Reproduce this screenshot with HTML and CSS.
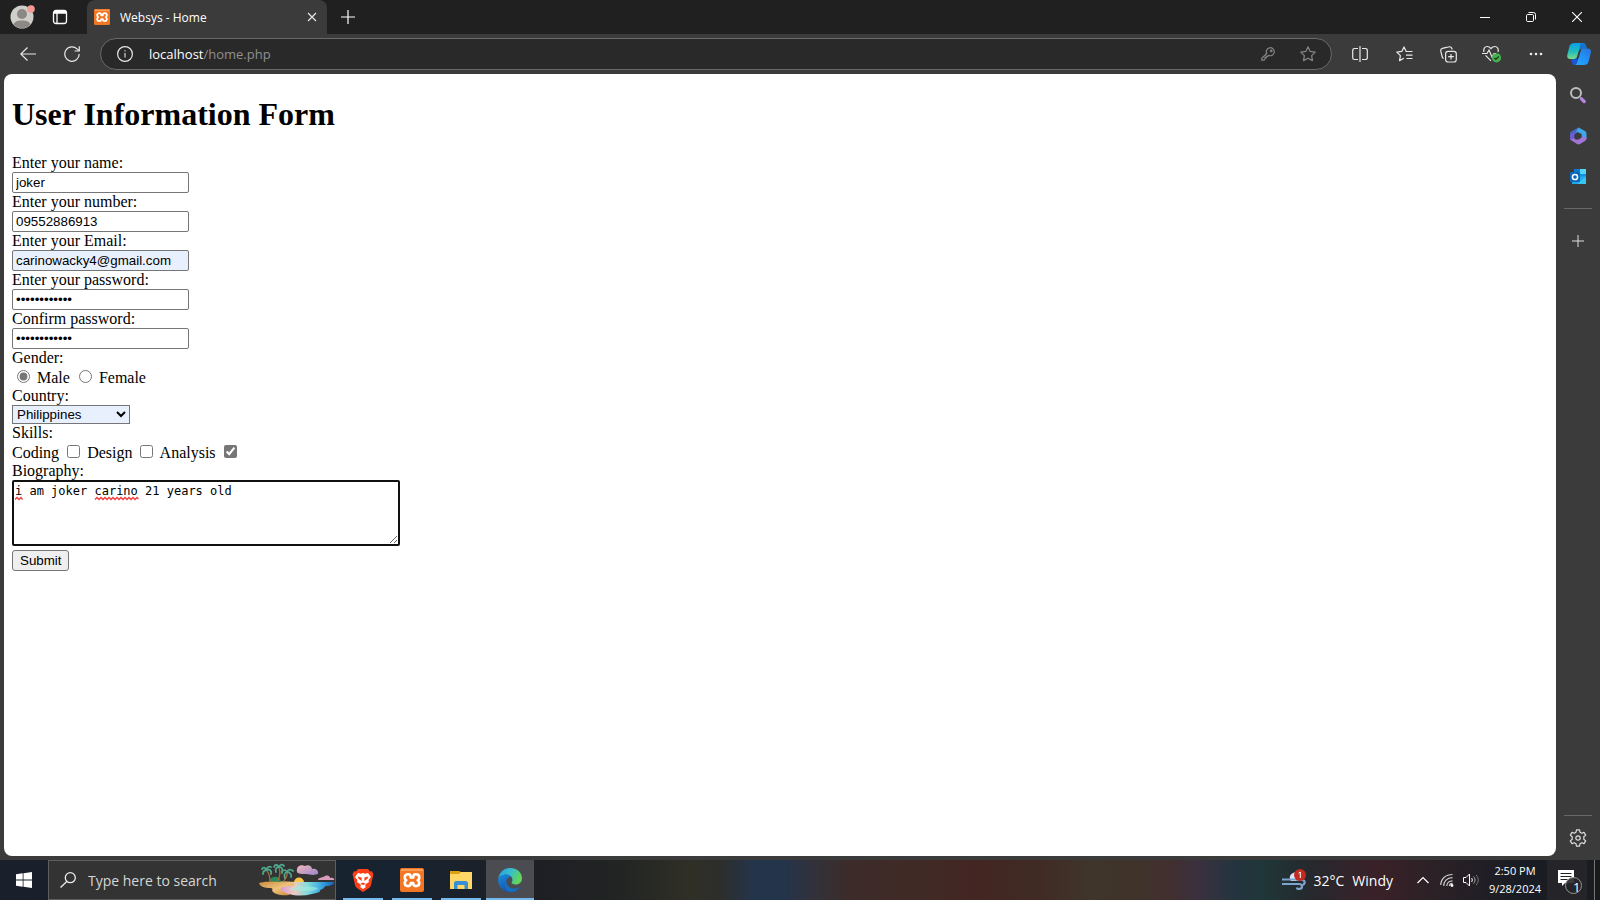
FILE: index.html
```html
<!DOCTYPE html>
<html lang="en">
<head>
<meta charset="utf-8">
<title>Websys - Home</title>
<link rel="stylesheet" href="styles.css">
</head>
<body>
<div class="desktop">
  <header class="titlebar">
    <button class="profile" aria-label="Profile">
      <svg width="26" height="26" viewBox="0 0 26 26"><circle cx="12" cy="14" r="11.5" fill="#d0cecb"/><circle cx="12" cy="11" r="5" fill="#8c8883"/><path d="M3.5 21.5C5 18 8 17.5 12 17.5s7 .5 8.500 4A11.500 11.500 0 0 1 3.500 21.500z" fill="#8c8883"/><circle cx="21" cy="6" r="3.800" fill="#f59a94"/></svg>
    </button>
    <button class="workspaces" aria-label="Tab actions">
      <svg width="16" height="16" viewBox="0 0 16 16" fill="none" stroke="#fff" stroke-width="1.300"><rect x="1.500" y="1.500" width="13" height="13" rx="2.500"/><path d="M1.500 4h13M2 2.700h12M5 4v10.500"/></svg>
    </button>
    <div class="tab">
      <svg width="16" height="16" viewBox="0 0 24 24"><use href="#xampp"/></svg>
      <span class="tab-title">Websys - Home</span>
      <button class="tab-close" aria-label="Close tab"><svg width="10" height="10" viewBox="0 0 10 10" stroke="#e4e4e4" stroke-width="1.200"><path d="M1 1l8 8M9 1L1 9"/></svg></button>
    </div>
    <button class="new-tab" aria-label="New tab"><svg width="14" height="14" viewBox="0 0 14 14" stroke="#fff" stroke-width="1.200"><path d="M7 0v14M0 7h14"/></svg></button>
    <div class="window-controls">
      <button aria-label="Minimize"><svg width="10" height="10" viewBox="0 0 10 10" stroke="#fff"><path d="M0 5.500h10"/></svg></button>
      <button aria-label="Restore"><svg width="10" height="10" viewBox="0 0 10 10" fill="none" stroke="#fff"><rect x=".5" y="2.500" width="7" height="7" rx="1.200"/><path d="M2.500.5H7.500A2 2 0 0 1 9.500 2.500V7.500"/></svg></button>
      <button aria-label="Close"><svg width="10" height="10" viewBox="0 0 10 10" stroke="#fff" stroke-width="1.100"><path d="M0 0l10 10M10 0L0 10"/></svg></button>
    </div>
  </header>

  <nav class="toolbar" aria-label="Browser toolbar">
    <button aria-label="Back"><svg width="16" height="16" viewBox="0 0 16 16" fill="none" stroke="#e8e8e8" stroke-width="1.200"><path d="M7.500 1.500L.8 8l6.700 6.500M1 8h15"/></svg></button>
    <button aria-label="Refresh"><svg width="16" height="16" viewBox="0 0 16 16" fill="none" stroke="#e8e8e8" stroke-width="1.200"><path d="M15.200 8A7.200 7.200 0 1 1 13 2.900L14.800 4.700M15.300.3V5H10.600"/></svg></button>
    <div class="address">
      <button class="info" aria-label="View site information"><svg width="16" height="16" viewBox="0 0 16 16" fill="none" stroke="#e8e8e8"><circle cx="8" cy="8" r="7.400" stroke-width="1.200"/><path d="M8 7v4.500M8 4.200v1.400" stroke-width="1.400" stroke="#bdbdbd"/></svg></button>
      <span class="url"><span class="host">localhost</span>/home.php</span>
      <button aria-label="Passwords"><svg width="14" height="14" viewBox="0 0 14 14" fill="none" stroke="#858585" stroke-width="1.200"><path d="M5.700 6.500A4 4 0 1 1 7.700 8.400L6.700 9.300H5.400V10.700H4V12.100L3 13.200H.8V11.200z"/><circle cx="10.300" cy="3.900" r=".7" fill="#858585"/></svg></button>
      <button aria-label="Add to favorites"><svg width="16" height="16" viewBox="0 0 16 16" fill="none" stroke="#858585" stroke-width="1.200" stroke-linejoin="round"><path d="M8 .8l2.200 4.600 5 .7-3.600 3.500.9 5L8 12.200l-4.500 2.400.9-5L.8 6.100l5-.7z"/></svg></button>
    </div>
    <button aria-label="Split screen"><svg width="16" height="16" viewBox="0 0 16 16" fill="none" stroke="#e8e8e8" stroke-width="1.200"><path d="M8 0v16M6 2.500H2.500A1.800 1.800 0 0 0 .7 4.300v7.400a1.800 1.800 0 0 0 1.800 1.800H6M10 2.500h3.500a1.800 1.800 0 0 1 1.800 1.800v7.400a1.800 1.800 0 0 1-1.800 1.800H10"/></svg></button>
    <button aria-label="Favorites"><svg width="17" height="16" viewBox="0 0 17 16" fill="none" stroke="#e8e8e8" stroke-width="1.200" stroke-linejoin="round"><path d="M16.500 5.500H10.200L8 .9 5.800 5.400l-5 .7 3.600 3.500-.9 5 4.300-2.300M10 9.200h6.500M10.500 12.500h6"/></svg></button>
    <button aria-label="Collections"><svg width="17" height="17" viewBox="0 0 17 17" fill="none" stroke="#e8e8e8" stroke-width="1.200"><rect x="5.600" y="5.300" width="10.700" height="10.700" rx="2.500"/><path d="M11 8v5.500M8.200 10.700h5.600M3.600 12.500C2.500 12 2.300 11.300 2.100 10.500L.8 5.200C.5 3.800 1 2.700 2.400 2.300L8.500.9C10 .5 11.500 1.200 12 2.800L12.200 3.500"/></svg></button>
    <button aria-label="Browser essentials"><svg width="20" height="18" viewBox="0 0 20 18" fill="none" stroke="#e8e8e8" stroke-width="1.200"><path d="M2 7C1 4 2.700 1.500 5.200 1.500c1.500 0 2.700.7 3.800 2 1.100-1.300 2.300-2 3.800-2C15.300 1.500 17 4 16 7M3.500 10.300l5.500 5.500M0 8.500h5L7 5l3 7 2-3.500h2"/><circle cx="14.500" cy="12.800" r="4.600" fill="#45b050" stroke="none"/><path d="M12.400 13l1.500 1.500 2.800-3" stroke="#17351b"/></svg></button>
    <button aria-label="Settings and more"><svg width="14" height="4" viewBox="0 0 14 4" fill="#eee"><circle cx="2" cy="2" r="1.300"/><circle cx="7" cy="2" r="1.300"/><circle cx="12" cy="2" r="1.300"/></svg></button>
    <button class="copilot" aria-label="Copilot"><svg width="24" height="24" viewBox="0 0 24 24"><defs><linearGradient id="cpA" x1="0" y1="0" x2="0" y2="1"><stop offset="0" stop-color="#08a0e8"/><stop offset=".55" stop-color="#22bdb9"/><stop offset="1" stop-color="#7cdc86"/></linearGradient><linearGradient id="cpB" x1="1" y1="0" x2="0" y2="1"><stop offset="0" stop-color="#2a70da"/><stop offset=".6" stop-color="#2197fa"/><stop offset="1" stop-color="#29aaff"/></linearGradient></defs><path d="M8 1h8c2 0 2.500 1.500 3 3l.8 2.500H15c-2 0-2.800 1-3.300 3l-1.500 5c-.5 1.700-1.400 2.500-3 2.500H3c-2.500 0-3.200-2-2.600-4.500l2-8C3 2.500 4.500 1 8 1z" fill="url(#cpA)"/><path d="M7 17c2 0 2.800-.8 3.300-2.500l-.3 4c0 3-.8 4.500-2.500 4.500-1.600 0-2.200-1-2.700-3L4 17z" fill="#1c55d8"/><path d="M19 6.500h2c2.600 0 3.400 2 2.800 4.500l-2 8c-.6 2.500-2 4-5 4H7.500c1.700 0 2.300-1.500 2.800-3.500l3-10C13.900 7.500 15 6.500 17 6.500z" fill="url(#cpB)"/><path d="M15 1c2.500 0 3.300 1 3.800 3l.8 2.500H15c-1.500 0-2.500.8-3 2.200l1-5C13.300 2 13.700 1 15 1z" fill="#1472cf"/><path d="M12.300 8.500L14 8l-2.500 8.500H9.800z" fill="#3b3b3b"/></svg></button>
  </nav>

  <div class="content">
    <main class="page">
      <h1>User Information Form</h1>
      <form action="#">
        <label for="name">Enter your name:</label><br>
        <input class="text" type="text" id="name" value="joker"><br>
        <label for="number">Enter your number:</label><br>
        <input class="text" type="text" id="number" value="09552886913"><br>
        <label for="email">Enter your Email:</label><br>
        <input class="text filled" type="email" id="email" value="carinowacky4@gmail.com"><br>
        <label for="password">Enter your password:</label><br>
        <input class="text" type="password" id="password" value="abcdefghijkl"><br>
        <label for="confirm">Confirm password:</label><br>
        <input class="text" type="password" id="confirm" value="abcdefghijkl"><br>
        <span>Gender:</span><br>
        <input type="radio" name="gender" id="male" checked> <label for="male">Male</label>
        <input type="radio" name="gender" id="female"> <label for="female">Female</label><br>
        <label for="country">Country:</label><br>
        <select class="filled country" id="country"><option>Philippines</option></select><br>
        <span>Skills:</span><br>
        <label for="coding">Coding</label> <input type="checkbox" id="coding">
        <label for="design">Design</label> <input type="checkbox" id="design">
        <label for="analysis">Analysis</label> <input type="checkbox" id="analysis" checked><br>
        <label for="bio">Biography:</label>
        <div class="bio-wrap">
          <textarea id="bio" class="bio" rows="4" spellcheck="false">i am joker carino 21 years old</textarea>
          <svg class="spelling" width="140" height="5" viewBox="0 0 140 5" fill="none" stroke="#f03a3a" stroke-width="1.300" aria-hidden="true"><path d="M0 3.500l2-2 2 2 2-2 1.500 2M80 3.500l2-2 2 2 2-2 2 2 2-2 2 2 2-2 2 2 2-2 2 2 2-2 2 2 2-2 2 2 2-2 2 2 2-2 2 2 2-2 2 2 2-2 1.500 1.500"/></svg>
        </div>
        <button class="submit" type="submit">Submit</button>
      </form>
    </main>
    <aside class="sidebar">
      <button aria-label="Search"><svg width="18" height="18" viewBox="0 0 18 18" fill="none"><circle cx="7" cy="7" r="5" stroke="#bdbdbd" stroke-width="2"/><path d="M11 11.500l1.500 1.500" stroke="#888" stroke-width="1.500"/><path d="M12.500 12.800l2.700 2.700" stroke="#b984ea" stroke-width="3.200" stroke-linecap="round"/></svg></button>
      <button aria-label="Microsoft 365"><svg width="18" height="18" viewBox="0 0 18 18"><path d="M9.500.5L3 4C1.700 4.800 1 5.500 1 7v5.500L5.500 11V7.500L12 3.500z" fill="#4664c8"/><path d="M9.500.5L16 4c1 .6 1.500 1.500 1.500 3v5l-5-2.500V7L7 4.500z" fill="#3fa7e8"/><path d="M1 12.500L8 17c1 .6 2 .5 3 0l5-3c1-.6 1.500-1.500 1.500-3.500L12.500 9.500 7 13l-2-2z" fill="#a374d8"/><path d="M7 4.500L5.500 7.500V11L1 12.500V8z" fill="#735bd2"/><path d="M9 5.500l3.500 2v3.300L9 12.800l-3.500-2V7.500z" fill="#3b3b3b"/></svg></button>
      <button aria-label="Outlook"><svg width="18" height="18" viewBox="0 0 18 18"><path d="M5 1h12v9H5z" fill="#1490df"/><path d="M11 1h6v5h-6z" fill="#50d4f8"/><path d="M5 1h6v5H5z" fill="#0c78c8"/><path d="M3 9l14-1v8H3z" fill="#22a7ec"/><path d="M11 13l6-4v7H9z" fill="#36c5ef"/><rect x="1" y="4" width="10" height="10" rx="1" fill="#0968be"/><circle cx="6" cy="9" r="2.600" fill="none" stroke="#fff" stroke-width="1.500"/></svg></button>
      <hr>
      <button class="add" aria-label="Customize sidebar"><svg width="12" height="12" viewBox="0 0 12 12" stroke="#e0e0e0"><path d="M6 0v12M0 6h12"/></svg></button>
      <hr class="lower">
      <button class="gear" aria-label="Settings"><svg width="18" height="18" viewBox="0 0 18 18" fill="none" stroke="#dedede" stroke-width="1.200" stroke-linejoin="round"><path d="M7.500.8h3L11 3.200l1.700 1 2.300-.8 1.700 2.700-1.900 1.700v2.400l1.900 1.700-1.700 2.700-2.300-.8-1.700 1-.5 2.400h-3L7 14.800l-1.700-1-2.300.8-1.700-2.700 1.900-1.700V7.800L1.300 6.100 3 3.400l2.300.8 1.700-1z"/><circle cx="9" cy="9" r="2.200"/></svg></button>
    </aside>
  </div>

  <footer class="taskbar">
    <button class="start" aria-label="Start"><svg width="16" height="16" viewBox="0 0 16 16" fill="#fff"><path d="M0 2.300L6.700 1.300V7.600H0zM7.500 1.200L16 0v7.600H7.500zM0 8.400h6.700v6.300L0 13.700zM7.500 8.400H16V16l-8.500-1.200z"/></svg></button>
    <div class="search">
      <svg width="16" height="16" viewBox="0 0 16 16" fill="none" stroke="#ececec" stroke-width="1.300"><circle cx="10.300" cy="5.700" r="5"/><path d="M6.800 9.500L.5 15.500"/></svg>
      <input type="text" placeholder="Type here to search" aria-label="Type here to search">
      <svg class="island" width="77" height="34" viewBox="0 0 77 34">
        <defs>
          <linearGradient id="sea" x1="0" y1="0" x2="1" y2="0"><stop offset="0" stop-color="#d79ad8"/><stop offset=".25" stop-color="#f0c9c0"/><stop offset=".5" stop-color="#7fdcdc"/><stop offset=".75" stop-color="#3ea8e0"/><stop offset="1" stop-color="#1160c0"/></linearGradient>
          <linearGradient id="sand" x1="0" y1="0" x2="1" y2="1"><stop offset="0" stop-color="#c98a3c"/><stop offset=".5" stop-color="#edc27c"/><stop offset="1" stop-color="#c5822f"/></linearGradient>
          <linearGradient id="cloud" x1="0" y1="0" x2="1" y2="1"><stop offset="0" stop-color="#f2b7b8"/><stop offset="1" stop-color="#9a86cf"/></linearGradient>
        </defs>
        <path d="M1 20c8-2 24-2 38-1l-2 5-6 8c-8 1-14-1-16-3s1-3-2-4C7 25 2 24 1 20z" fill="url(#sand)"/>
        <path d="M36 19.500a5 5 0 0 1 10 0z" fill="#ffc545"/>
        <path d="M34 19h42c1 2-3 4-8 4-3 1-1 3-6 4 1 2-3 3-8 4-8 2-16 2-23 0-6-2-9-4-8-6s14-1 14-4z" fill="url(#sea)"/>
        <path d="M38 22c6 2 10 1 18 2s2 4-6 4-14 0-20-2c5-1 9-2 8-4z" fill="#a4ebdf" opacity=".6"/>
        <path d="M11 18c1-4 8-6 11-2l1 3z" fill="#238b57"/>
        <path d="M9 8c3 3 3 7 3 11M21 5c2 5 1 9-2 14M29 9c1 5-2 7-4 10" fill="none" stroke="#b06a3a" stroke-width="1.200"/>
        <g fill="none" stroke="#4fa68a" stroke-width="1.800" stroke-linecap="round"><path d="M9 7C7 4 5 4 4 6M9 7C6 7 5 9 5 11M9 7c0-3 2-4 4-3M9 7c3-1 5 1 4 4"/><path d="M21 4c-2-3-4-3-5 0M21 4c-3 0-4 2-3 5M21 4c1-3 4-3 5-1M21 4c3 0 4 2 3 5"/><path d="M29 9c-2-3-5-2-5 1M29 9c-3 1-3 4-2 6M29 9c1-3 4-3 6-1M29 9c3 0 5 3 4 5"/></g>
        <path d="M39 9c-1-5 3-8 8-6 3-2 7 0 7 3 4-1 7 2 6 5l-5 1-7-1c-4 0-8 0-9-2z" fill="url(#cloud)"/>
        <path d="M60 17c0-3 5-2 7-4 3-1 5 0 5 2 3-1 5 1 4 2z" fill="#d99cbd"/>
      </svg>
    </div>
    <div class="apps">
      <button aria-label="Brave"><svg width="22" height="24" viewBox="0 0 22 24"><path d="M6 1h10l2 2.500 2-.3 1.500 3L21 8l-2 9c-.5 2-1.500 2.800-3 3.800L11 24l-5-3.200c-1.500-1-2.500-1.800-3-3.800L1 8 .5 6.200 2 3.200l2 .3z" fill="#fb3f19"/><path d="M6 5l3 .7L11 5l2 .7L16 5l3 4-2.500 3 .5 2-3 2-1 2 1 1-3 2-3-2 1-1-1-2-3-2 .5-2L3 9z" fill="#fff"/><path d="M5.500 8.500l4 1 .3 3.500-3-2M16.500 8.500l-4 1-.3 3.500 3-2M8 16l3-1.500 3 1.500-3 1z" fill="#fb3f19"/></svg></button>
      <button aria-label="XAMPP"><svg width="24" height="24" viewBox="0 0 24 24"><g id="xampp"><rect width="24" height="24" rx="2" fill="#f37623"/><path d="M1 1h22v2H1z" fill="#f89c59"/><path d="M8.200 6.300C5.800 6.300 4.700 7.700 4.700 9.400c0 1.300.7 2.100 1.600 2.800-.9.700-1.600 1.500-1.600 2.800 0 1.700 1.100 3.100 3.500 3.100 2 0 2.600-1.300 2.600-3.100h2.400c0 1.800.6 3.100 2.600 3.100 2.400 0 3.500-1.400 3.500-3.100 0-1.300-.7-2.100-1.600-2.800.9-.7 1.600-1.500 1.600-2.800 0-1.700-1.100-3.100-3.500-3.100-2 0-2.600 1.300-2.600 3.100h-2.400c0-1.800-.6-3.100-2.600-3.100z" fill="none" stroke="#fff" stroke-width="2.600" stroke-linejoin="round"/></g></svg></button>
      <button aria-label="File Explorer"><svg width="22" height="18" viewBox="0 0 22 18"><path d="M0 0h9l2 1h11v17H0z" fill="#dda013"/><path d="M0 3h9l2-2h11v17H0z" fill="#ffd766"/><path d="M4 18v-6c0-1 1-2 2-2h10c1 0 2 1 2 2v6h-3.500v-4h-7v4z" fill="#378fd4"/></svg></button>
      <button class="active" aria-label="Edge"><svg width="24" height="24" viewBox="0 0 24 24"><defs><linearGradient id="edA" x1="0" y1="0" x2="1" y2=".4"><stop offset="0" stop-color="#229fdd"/><stop offset=".5" stop-color="#37bcd0"/><stop offset="1" stop-color="#62d65b"/></linearGradient><linearGradient id="edB" x1="0" y1="0" x2=".6" y2="1"><stop offset="0" stop-color="#1b8bdf"/><stop offset="1" stop-color="#1150a3"/></linearGradient></defs><path d="M.2 11C1 4.500 6 0 12.200 0 19 0 24 4.800 24 10.200c0 4-3 6.300-6.300 6.300-2.800 0-4.200-1-4.200-1.900 0-.7 1-.9 1-2.600C14.500 9 11.500 6.800 8 6.800 4 6.800 1 8.500.2 11z" fill="url(#edA)"/><path d="M.1 12C.2 8.600 4 6.500 8 6.500c3.500 0 5.500 1.800 5.500 2.500C10 8.500 8 11.500 8 14.500c0 4 4 7 8 6.500 2.500-.3 4.500-1.200 5.500-1.800C19.500 22.500 16 24 12 24 5 24 0 18.500.1 12z" fill="url(#edB)"/><path d="M8.500 12c-1 4 2 8 6.500 8.500 3 .3 5-.5 6.800-1.800-2 3.800-5.500 5.300-9.800 5.300-4-1-6-5-5.500-8C6.700 14 7.500 12.700 8.500 12z" fill="#176fbf"/></svg></button>
    </div>
    <div class="tray">
      <button class="weather"><svg width="24" height="22" viewBox="0 0 24 22" fill="none"><path d="M8 10a6 5 0 0 1 12-3l2 5H9z" fill="#d9e5f2"/><path d="M0 10.500h15M0 15h17c4 0 4 5 0 5-1 0-2-.5-2-1.500M14 11h6c4 0 3 5 0 5" stroke="#7da4cf" stroke-width="2.200"/><circle cx="18" cy="6" r="6" fill="#c42b20"/><path d="M16.600 4.300L18.300 3v6" stroke="#fff"/></svg><span>32°C</span><span>Windy</span></button>
      <button class="chevron" aria-label="Show hidden icons"><svg width="12" height="8" viewBox="0 0 12 8" fill="none" stroke="#fff" stroke-width="1.200"><path d="M.5 7L6 1.500 11.500 7"/></svg></button>
      <button class="wifi" aria-label="Network"><svg width="14" height="14" viewBox="0 0 14 14" fill="none" stroke-width="1.200"><path d="M.8 12C.8 6 5.500 1.500 12.500 1.500M3.800 13C3.500 8.500 7 4.700 12.500 4.700M6.800 13c0-3 2.500-5.200 5.700-5.200M9.500 13c0-1.500 1.200-2.600 3-2.600" stroke="#cfcfcf"/><circle cx="12" cy="12.500" r="1.400" fill="#fff"/></svg></button>
      <button class="volume" aria-label="Volume"><svg width="17" height="14" viewBox="0 0 17 14" fill="none" stroke="#fff"><path d="M.5 4.500H3L6.500 1v12L3 9.500H.5zM8.500 5c1 1 1 3 0 4"/><path d="M10.500 3.500c2 2 2 5 0 7" stroke="#aaa"/><path d="M13 2c3 3 3 7 0 10" stroke="#777"/></svg></button>
      <button class="clock"><span>2:50 PM</span><span>9/28/2024</span></button>
      <button class="notifications" aria-label="Notifications, 1 new"><svg width="26" height="26" viewBox="0 0 26 26"><path d="M1 0h16v13H8l-3 3v-3H1z" fill="#fff"/><path d="M3.500 3.500h11M3.500 6.500h11M3.500 9.500h7" stroke="#222"/><circle cx="16.500" cy="15.500" r="8" fill="#252529" fill-opacity=".9" stroke="#969696"/></svg><span class="count">1</span></button>
      <div class="show-desktop"></div>
    </div>
  </footer>
</div>
</body>
</html>
```
FILE: styles.css
```css
* { box-sizing: border-box; }

body {
  margin: 0;
  background: #3b3b3b;
  font-family: "Open Sans", "Noto Sans", sans-serif;
}

button {
  font-family: inherit;
}

svg { display: block; flex: none; }

.desktop {
  min-height: 100vh;
  display: flex;
  flex-direction: column;
}

.titlebar button,
.toolbar button,
.sidebar button,
.taskbar button {
  display: flex;
  align-items: center;
  justify-content: center;
  padding: 0;
  border: 0;
  background: none;
  color: #fff;
}

/* Title bar and tab */
.titlebar {
  display: flex;
  height: 34px;
  background: #202020;
}
.titlebar .profile { width: 26px; margin-left: 10px; padding-bottom: 2px; }
.titlebar .workspaces { width: 16px; margin: 0 19px 0 16px; }
.tab {
  display: flex;
  align-items: center;
  width: 240px;
  padding: 0 10px 0 7px;
  border-radius: 8px 8px 0 0;
  background: #3b3b3b;
  color: #fff;
  font-size: 12px;
}
.tab-title { flex: 1; margin-left: 10px; }
.titlebar .tab-close { width: 10px; }
.titlebar .new-tab { width: 42px; }
.window-controls { display: flex; margin-left: auto; }
.titlebar .window-controls button { width: 46px; }

/* Toolbar */
.toolbar {
  display: flex;
  align-items: center;
  height: 40px;
  padding-left: 6px;
}
.toolbar button { width: 44px; height: 32px; }
.toolbar .copilot { width: 42px; }
.address {
  flex: 1;
  display: flex;
  align-items: center;
  height: 32px;
  margin: 0 6px;
  padding-right: 3px;
  border: 1px solid #6a6a6a;
  border-radius: 16px;
  background: #292929;
  font-size: 13px;
}
.toolbar .info { width: 48px; }
.url { flex: 1; color: #8f8f8f; }
.host { color: #fff; }
.toolbar .address button:not(.info) { width: 40px; }

/* Page area */
.content { flex: 1; display: flex; padding: 0 0 4px 4px; }
.page {
  flex: 1;
  padding: 22px 8px;
  border-radius: 8px;
  background: #fff;
  color: #000;
  font-family: "Liberation Serif", serif;
  font-size: 16px;
}
h1 { margin: 0 0 21px; font-size: 32px; line-height: 37px; }
.page input { accent-color: #767676; }
.text {
  width: 177px;
  height: 21px;
  padding: 1px 3px;
  border: 1px solid #767676;
  border-radius: 2px;
  background: #fff;
  font-family: "Liberation Sans", sans-serif;
}
.filled { background: #e8f0fe; }
.country {
  width: 118px;
  height: 19px;
  border: 1px solid #767676;
  border-radius: 0;
  color: #000;
  font-family: "Liberation Sans", sans-serif;
}
.bio-wrap { position: relative; width: fit-content; }
.bio {
  display: block;
  width: 388px;
  height: 66px;
  padding: 2px 1px;
  border: 2px solid #101010;
  border-radius: 2px;
  outline: 0;
  font: 12px/15px "DejaVu Sans Mono", monospace;
}
.spelling { position: absolute; left: 3px; top: 16px; }
.submit {
  height: 21px;
  margin-top: 4px;
  padding: 1px 7px;
  border: 1px solid #767676;
  border-radius: 3px;
  background: #efefef;
  font-family: "Liberation Sans", sans-serif;
}

/* Sidebar */
.sidebar {
  display: flex;
  flex-direction: column;
  align-items: center;
  width: 44px;
}
.sidebar button { width: 32px; height: 41px; }
.sidebar hr {
  width: 28px;
  margin: 11px 0;
  border: 0;
  border-top: 1px solid #686868;
}
.sidebar .lower { margin: auto 0 0; }
.sidebar .gear { height: 44px; margin-bottom: -4px; }

/* Taskbar */
.taskbar {
  display: flex;
  height: 40px;
  background: linear-gradient(90deg, #191f2b 0%, #172330 25%, #1e1f24 34%, #222523 39%, #302f26 43%, #2c2e2b 45%, #24344a 47%, #24344a 49%, #33313a 51%, #3c2c2a 53%, #412a25 58%, #432522 61%, #402b24 65%, #3f352a 68%, #3f332a 71%, #422f2f 73%, #3a303e 75%, #253440 77%, #1f3638 79%, #26282d 82%, #3a2128 86%, #2a2126 90%, #191c24 95%, #191c20 100%);
  color: #fff;
}
.taskbar .start { width: 48px; }
.search {
  display: flex;
  align-items: center;
  width: 288px;
  padding-left: 11px;
  border: 1px solid #5d5d5d;
  background: #333;
}
.search input {
  flex: 1;
  min-width: 0;
  margin-left: 12px;
  padding: 0;
  border: 0;
  background: none;
  font: 14px "Open Sans", sans-serif;
}
.search input::placeholder { color: #d6d6d6; }
.apps { display: flex; gap: 1px; margin-left: 3px; }
.taskbar .apps button { position: relative; width: 48px; }
.apps button::after {
  content: "";
  position: absolute;
  left: 4px;
  right: 4px;
  bottom: 0;
  height: 2px;
  background: #76b9ed;
}
.taskbar .apps .active { background: #4b4c51; }
.apps .active::after { left: 0; right: 0; }
.tray { display: flex; margin-left: auto; }
.taskbar .weather { gap: 8px; margin-right: 18px; font-size: 14px; }
.taskbar .chevron { width: 24px; margin-right: -1px; }
.taskbar .wifi { width: 26px; }
.taskbar .volume { width: 23px; }
.taskbar .clock {
  flex-direction: column;
  width: 64px;
  font-size: 11px;
  line-height: 18px;
}
.taskbar .notifications {
  position: relative;
  width: 40px;
  padding: 6px 0 0 6px;
  background: #252529;
}
.count { position: absolute; left: 26px; top: 18px; font-size: 13px; line-height: 18px; }
.show-desktop { width: 13px; border-right: 5px solid #17191b; box-shadow: inset -1px 0 #777; }
```
